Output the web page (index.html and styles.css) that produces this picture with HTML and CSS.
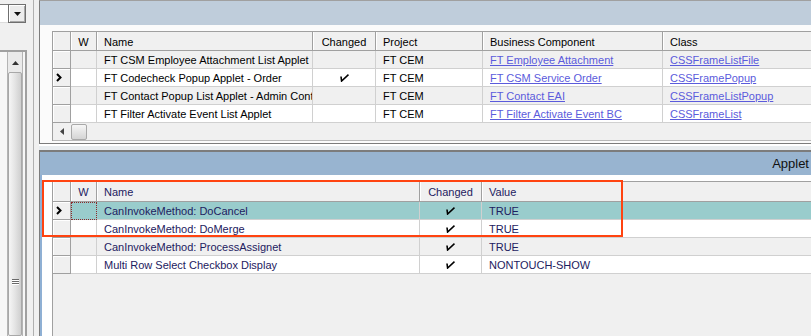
FILE: index.html
```html
<!DOCTYPE html>
<html>
<head>
<meta charset="utf-8">
<link rel="stylesheet" href="styles.css">
</head>
<body>
<div class="app">
  <aside class="left">
    <div class="combo">
      <div class="combo-field"></div>
      <div class="combo-btn"><svg width="7" height="4" viewBox="0 0 7 4"><path d="M0 0H7L3.5 4Z" fill="#111"/></svg></div>
    </div>
    <div class="tree-frame">
      <div class="vscroll">
        <div class="vs-up"><svg width="7" height="4" viewBox="0 0 7 4"><path d="M0 4H7L3.5 0Z" fill="#333"/></svg></div>
        <div class="vs-thumb"><div class="grip"><i></i><i></i><i></i></div></div>
      </div>
    </div>
  </aside>
  <div class="splitter"></div>
  <main class="right">
    <section class="panel upper">
      <div class="band"></div>
      <div class="panel-body">
        <div class="grid grid-up">
          <div class="row head">
            <div class="sel"></div><div class="c center">W</div><div class="c">Name</div><div class="c center">Changed</div><div class="c">Project</div><div class="c">Business Component</div><div class="c">Class</div>
          </div>
          <div class="row odd">
            <div class="sel"></div><div class="c"></div><div class="c">FT CSM Employee Attachment List Applet</div><div class="c"></div><div class="c">FT CEM</div><div class="c"><a>FT Employee Attachment</a></div><div class="c"><a>CSSFrameListFile</a></div>
          </div>
          <div class="row">
            <div class="sel"><svg class="chev" width="6" height="9" viewBox="0 0 6 9"><path d="M1 1L4.5 4.5L1 8" fill="none" stroke="#000" stroke-width="2"/></svg></div><div class="c"></div><div class="c">FT Codecheck Popup Applet - Order</div><div class="c center"><svg class="chk" width="9" height="8" viewBox="0 0 9 8"><path d="M1 2.5L1.6 7L8.5 0.7" fill="none" stroke="#000" stroke-width="1.6"/></svg></div><div class="c">FT CEM</div><div class="c"><a>FT CSM Service Order</a></div><div class="c"><a>CSSFramePopup</a></div>
          </div>
          <div class="row odd">
            <div class="sel"></div><div class="c"></div><div class="c">FT Contact Popup List Applet - Admin Conta</div><div class="c"></div><div class="c">FT CEM</div><div class="c"><a>FT Contact EAI</a></div><div class="c"><a>CSSFrameListPopup</a></div>
          </div>
          <div class="row">
            <div class="sel"></div><div class="c"></div><div class="c">FT Filter Activate Event List Applet</div><div class="c"></div><div class="c">FT CEM</div><div class="c"><a>FT Filter Activate Event BC</a></div><div class="c"><a>CSSFrameList</a></div>
          </div>
          <div class="hscroll">
            <div class="hs-left"><svg width="4" height="7" viewBox="0 0 4 7"><path d="M4 0V7L0 3.5Z" fill="#444"/></svg></div>
            <div class="hs-thumb"></div>
          </div>
        </div>
      </div>
    </section>
    <div class="hsplit"></div>
    <section class="panel lower">
      <div class="band"><span class="band-title">Applet</span></div>
      <div class="panel-body">
        <div class="grid grid-low">
          <div class="row head">
            <div class="sel"></div><div class="c center">W</div><div class="c">Name</div><div class="c center">Changed</div><div class="c">Value</div>
          </div>
          <div class="row selected">
            <div class="sel"><svg class="chev" width="6" height="9" viewBox="0 0 6 9"><path d="M1 1L4.5 4.5L1 8" fill="none" stroke="#000" stroke-width="2"/></svg></div><div class="c focus"></div><div class="c">CanInvokeMethod: DoCancel</div><div class="c center"><svg class="chk" width="9" height="8" viewBox="0 0 9 8"><path d="M1 2.5L1.6 7L8.5 0.7" fill="none" stroke="#000" stroke-width="1.6"/></svg></div><div class="c">TRUE</div>
          </div>
          <div class="row">
            <div class="sel"></div><div class="c"></div><div class="c">CanInvokeMethod: DoMerge</div><div class="c center"><svg class="chk" width="9" height="8" viewBox="0 0 9 8"><path d="M1 2.5L1.6 7L8.5 0.7" fill="none" stroke="#000" stroke-width="1.6"/></svg></div><div class="c">TRUE</div>
          </div>
          <div class="row odd">
            <div class="sel"></div><div class="c"></div><div class="c">CanInvokeMethod: ProcessAssignet</div><div class="c center"><svg class="chk" width="9" height="8" viewBox="0 0 9 8"><path d="M1 2.5L1.6 7L8.5 0.7" fill="none" stroke="#000" stroke-width="1.6"/></svg></div><div class="c">TRUE</div>
          </div>
          <div class="row">
            <div class="sel"></div><div class="c"></div><div class="c">Multi Row Select Checkbox Display</div><div class="c center"><svg class="chk" width="9" height="8" viewBox="0 0 9 8"><path d="M1 2.5L1.6 7L8.5 0.7" fill="none" stroke="#000" stroke-width="1.6"/></svg></div><div class="c">NONTOUCH-SHOW</div>
          </div>
        </div>
      </div>
      <div class="callout"></div>
    </section>
  </main>
</div>
</body>
</html>
```

FILE: styles.css
```css
* { box-sizing: border-box; }
html, body { margin: 0; padding: 0; }
body {
  background: #f0f0f0;
  font-family: "Liberation Sans", Arial, sans-serif;
  font-size: 11px;
  color: #000;
}
.app {
  display: flex;
  width: 811px;
  height: 336px;
  overflow: hidden;
}

/* ---------- left pane ---------- */
.left {
  width: 33px;
  flex: none;
  display: flex;
  flex-direction: column;
  padding-top: 4px;
}
.combo {
  display: flex;
  width: 26px;
  height: 19px;
}
.combo-field {
  width: 8px;
  background: #fff;
  border-top: 1px solid #7a7a7a;
  border-bottom: 1px solid #dcdcdc;
}
.combo-btn {
  width: 18px;
  display: flex;
  align-items: center;
  justify-content: center;
  background: #ececec;
  border: 1px solid #6f6f6f;
  box-shadow: inset 1px 1px #fff, inset -1px -1px #a8a8a8;
}
.tree-frame {
  margin-top: 27px;
  width: 27px;
  flex: 1;
  border-top: 2px solid #a0a0a0;
  border-right: 2px solid #a0a0a0;
  padding-left: 7px;
  background: #f7f7f7;
}
.vscroll {
  width: 16px;
  height: 100%;
  border-left: 1px solid #b4b4b4;
  border-right: 1px solid #b4b4b4;
  background: #eaeaea;
  display: flex;
  flex-direction: column;
}
.vs-up {
  height: 20px;
  display: flex;
  align-items: center;
  justify-content: center;
  padding-top: 2px;
}
.vs-thumb {
  flex: 1;
  border: 1px solid #a8a8a8;
  border-radius: 2px;
  background: linear-gradient(to right, #f6f6f6 0%, #e6e6e6 45%, #cfcfcf 100%);
  position: relative;
}
.grip {
  position: absolute;
  left: 3px;
  top: 206px;
  width: 7px;
  display: flex;
  flex-direction: column;
  gap: 1px;
}
.grip i {
  display: block;
  height: 1px;
  background: #6a6a6a;
  box-shadow: 0 1px #fff;
}
.splitter {
  width: 6px;
  flex: none;
  border-left: 1px solid #b0b0b0;
}

/* ---------- right pane ---------- */
.right {
  flex: 1;
  display: flex;
  flex-direction: column;
  min-width: 0;
}
.panel {
  border-left: 1px solid #7c7c7c;
  overflow: hidden;
  display: flex;
  flex-direction: column;
}
.upper {
  height: 144px;
  flex: none;
  background: #fbfbfb;
  border-top: 1px solid #a0a0a0;
  border-bottom: 1px solid #7c7c7c;
}
.upper .band {
  height: 24px;
  flex: none;
  background: #bfcddb;
}
.upper .panel-body {
  padding: 6px 0 0 12px;
}
.hsplit {
  height: 6px;
  flex: none;
  border-top: 2px solid #ffffff;
  background: #e8ecef;
}
.lower {
  flex: 1;
  position: relative;
  border-top: 2px solid #7c7c7c;
  background: #fff;
}
.lower .band {
  height: 23px;
  flex: none;
  background: #98b4d0;
  display: flex;
  align-items: center;
  justify-content: flex-end;
  padding-right: 2px;
}
.band-title {
  font-size: 13px;
  color: #111;
  white-space: nowrap;
}
.lower .panel-body {
  flex: 1;
  display: flex;
  flex-direction: column;
  border-left: 2px solid #8fb0d4;
  padding: 6px 0 0 10px;
}

/* ---------- grids ---------- */
.grid {
  border-top: 1px solid #a0a0a0;
  border-left: 1px solid #a0a0a0;
  background: #f0f0f0;
  width: 780px;
}
.grid-low {
  flex: 1;
}
.row {
  display: grid;
  height: 18px;
  background: #fff;
}
.grid-up .row {
  grid-template-columns: 18px 26px 216px 63px 107px 180px 170px;
}
.grid-low .row {
  grid-template-columns: 18px 26px 323px 62px 360px;
}
.row.odd { background: #f0f0f0; }
.row.head {
  height: 19px;
  background: #f0f0f0;
}
.grid-low .row.head { height: 20px; }
.c {
  border-right: 1px solid #d0d0d0;
  border-bottom: 1px solid #d0d0d0;
  padding: 1px 6px 0 7px;
  white-space: nowrap;
  overflow: hidden;
  display: flex;
  align-items: center;
}
.c.center { justify-content: center; padding: 1px 0 0 0; }
.head .c {
  border-right: 1px solid #a0a0a0;
  border-bottom: 1px solid #a0a0a0;
  box-shadow: inset 1px 0 #fff;
}
.sel {
  background: #f0f0f0;
  border-right: 1px solid #a0a0a0;
  border-bottom: 1px solid #a0a0a0;
  box-shadow: inset 1px 1px #fff;
  display: flex;
  align-items: center;
  padding-left: 3px;
}
.head .sel { box-shadow: inset 1px 0 #fff; }
a {
  color: #5b5bdc;
  text-decoration: underline;
}
.grid-low .c { color: #1d2060; }
.row.selected .c { background: #99cccc; }
.c.focus { border: 1px dotted #8a2a2a; }

.hscroll {
  height: 18px;
  display: flex;
  align-items: center;
  border-bottom: 1px solid #b8b8b8;
  background: #f0f0f0;
}
.hs-left {
  width: 18px;
  display: flex;
  align-items: center;
  justify-content: center;
}
.hs-thumb {
  width: 16px;
  height: 16px;
  border: 1px solid #a8a8a8;
  border-radius: 2px;
  background: linear-gradient(#f6f6f6, #d4d4d4);
}

/* ---------- callout overlay ---------- */
.callout {
  position: absolute;
  left: 2px;
  top: 28px;
  width: 581px;
  height: 57px;
  border: 2px solid #ff4310;
  pointer-events: none;
}
```
